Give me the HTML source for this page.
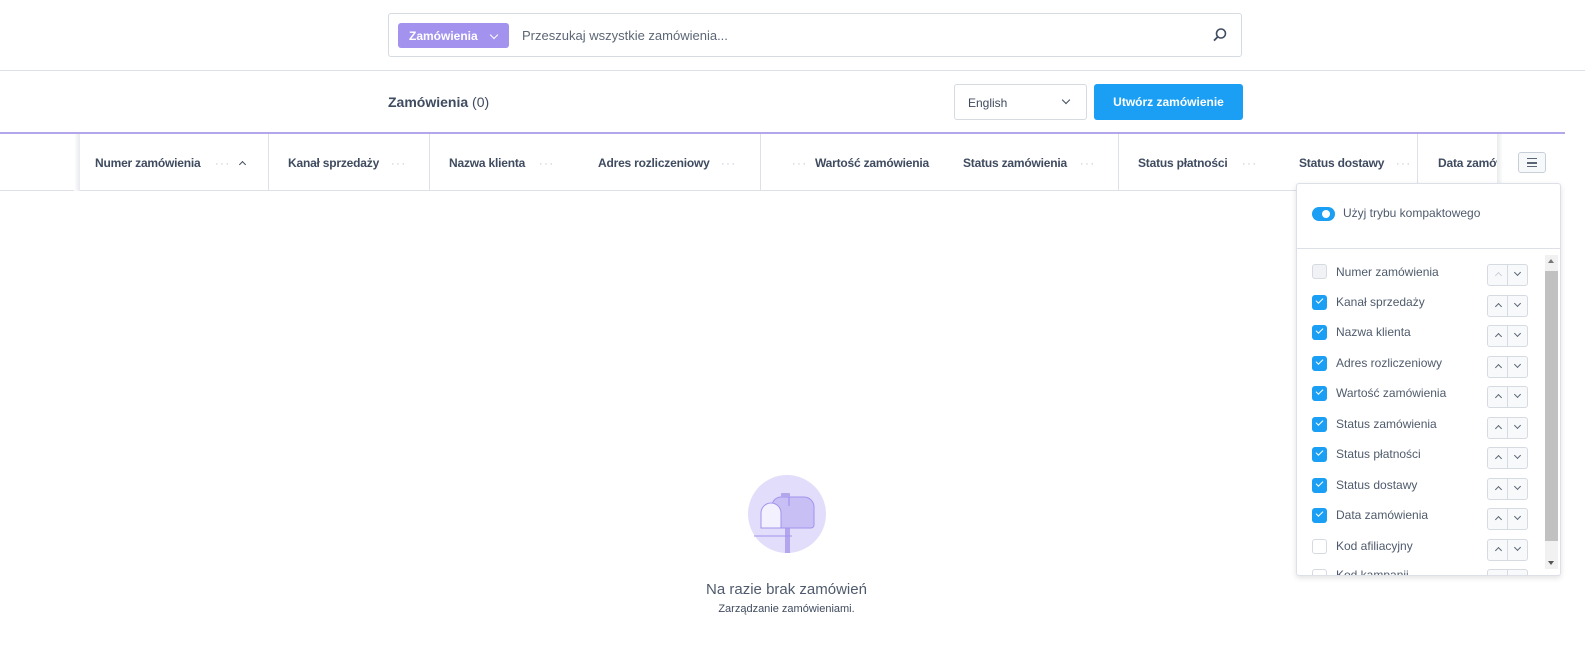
<!DOCTYPE html>
<html><head><meta charset="utf-8"><style>
*{box-sizing:border-box;margin:0;padding:0}
body{width:1585px;height:651px;overflow:hidden;background:#fff;font-family:"Liberation Sans",sans-serif;color:#3f4b5f;position:relative}
.abs{position:absolute}
.search{left:388px;top:13px;width:854px;height:44px;border:1px solid #d6dbe1;border-radius:3px}
.pill{left:9px;top:9px;width:111px;height:25px;background:#a393ee;border-radius:3px;color:#fff;font-size:12px;font-weight:bold;padding:6px 0 0 11px}
.hdr{font-size:12px;font-weight:bold;color:#3f4b5f;top:156px;letter-spacing:-0.2px}
.dots{color:#bcc3cc;font-size:11px;top:158px;letter-spacing:1.5px}
.vl{width:1px;background:#dde1e7;top:134px;height:57px}
.row{left:1312px;font-size:12px;color:#4f5b6c}
.cb{width:15px;height:15px;border-radius:3px;background:#1a9ff5;left:1312px}
.cb::after{content:"";position:absolute;left:4px;top:3px;width:6px;height:3px;border-left:1.5px solid #fff;border-bottom:1.5px solid #fff;transform:rotate(-45deg)}
.cbe{width:15px;height:15px;border-radius:3px;border:1px solid #d6dbe1;left:1312px}
.btns{left:1487px;width:41px;height:22px;border:1px solid #d6dbe1;border-radius:3px;background:#f8f9fb}
.btns::before{content:"";position:absolute;left:19px;top:0;width:1px;height:20px;background:#d6dbe1}
.btns i{position:absolute;top:6px;width:5px;height:5px;border-left:1.5px solid #5b6574;border-top:1.5px solid #5b6574}
.btns i.u{left:8px;top:8px;transform:rotate(45deg)}
.btns i.d{left:27px;top:5px;transform:rotate(225deg)}
</style></head><body>
<div class="abs search">
 <div class="abs pill">Zamówienia <span style="display:inline-block;width:6px;height:6px;border-right:1.5px solid #fff;border-bottom:1.5px solid #fff;transform:rotate(45deg);margin:0 0 2px 10px"></span></div>
 <div class="abs" style="left:133px;top:14px;font-size:13px;color:#5d6775">Przeszukaj wszystkie zamówienia...</div>
 <svg class="abs" style="left:823px;top:13px" width="16" height="16" viewBox="0 0 16 16"><circle cx="9" cy="6.5" r="4.5" fill="none" stroke="#3f4b5f" stroke-width="1.6"/><path d="M5.8 9.8L2 13.6" stroke="#3f4b5f" stroke-width="1.8"/></svg>
</div>
<div class="abs" style="left:0;top:70px;width:1585px;height:1px;background:#dde1e7"></div>
<div class="abs" style="left:388px;top:94px;font-size:14px;font-weight:bold;color:#3f4b5f">Zamówienia <span style="font-weight:normal">(0)</span></div>
<div class="abs" style="left:954px;top:84px;width:133px;height:36px;border:1px solid #d6dbe1;border-radius:3px;font-size:12px;padding:11px 0 0 13px">English<span class="abs" style="right:17px;top:12px;width:6px;height:6px;border-right:1.5px solid #3f4b5f;border-bottom:1.5px solid #3f4b5f;transform:rotate(45deg)"></span></div>
<div class="abs" style="left:1094px;top:84px;width:149px;height:36px;background:#1a9ff5;border-radius:3px;color:#fff;font-size:12px;font-weight:bold;text-align:center;padding-top:11px">Utwórz zamówienie</div>
<div class="abs" style="left:0;top:132px;width:1565px;height:2px;background:#b3a6ec"></div>
<div class="abs" style="left:0;top:190px;width:1497px;height:1px;background:#dde1e7"></div>
<div class="abs" style="left:74px;top:134px;width:6px;height:57px;background:linear-gradient(to right,#fff,#e8eaed)"></div>
<div class="abs vl" style="left:268px"></div><div class="abs vl" style="left:429px"></div><div class="abs vl" style="left:760px"></div><div class="abs vl" style="left:1118px"></div><div class="abs vl" style="left:1417px"></div>
<div class="abs" style="left:1497px;top:134px;width:6px;height:57px;background:linear-gradient(to left,#fff,#e8eaed)"></div>
<div class="abs hdr" style="left:95px">Numer zamówienia</div><div class="abs dots" style="left:215px">···</div><div class="abs" style="left:240px;top:162px;width:5px;height:5px;border-left:1.5px solid #3f4b5f;border-top:1.5px solid #3f4b5f;transform:rotate(45deg)"></div>
<div class="abs hdr" style="left:288px">Kanał sprzedaży</div><div class="abs dots" style="left:391px">···</div>
<div class="abs hdr" style="left:449px">Nazwa klienta</div><div class="abs dots" style="left:539px">···</div>
<div class="abs hdr" style="left:598px">Adres rozliczeniowy</div><div class="abs dots" style="left:721px">···</div>
<div class="abs dots" style="left:792px">···</div><div class="abs hdr" style="left:815px">Wartość zamówienia</div>
<div class="abs hdr" style="left:963px">Status zamówienia</div><div class="abs dots" style="left:1080px">···</div>
<div class="abs hdr" style="left:1138px">Status płatności</div><div class="abs dots" style="left:1242px">···</div>
<div class="abs hdr" style="left:1299px">Status dostawy</div><div class="abs dots" style="left:1396px">···</div>
<div class="abs hdr" style="left:1438px;width:59px;overflow:hidden;white-space:nowrap">Data zamówienia</div>
<div class="abs" style="left:1518px;top:152px;width:28px;height:21px;border:1px solid #c9cfd7;border-radius:3px;background:#f7f8fa"><div class="abs" style="left:8px;top:5px;width:10px;height:9px;border-top:1.5px solid #5b6574;border-bottom:1.5px solid #5b6574"></div><div class="abs" style="left:8px;top:9px;width:10px;height:1.5px;background:#5b6574"></div></div>
<div class="abs" style="left:1296px;top:183px;width:265px;height:393px;border:1px solid #dde1e7;border-radius:3px;background:#fff;box-shadow:0 2px 6px rgba(0,0,0,.12);overflow:hidden">
 <div class="abs" style="left:15px;top:23px;width:23px;height:14px;border-radius:7px;background:#1a9ff5"><div class="abs" style="left:10px;top:3px;width:8px;height:8px;border-radius:4px;background:#fff"></div></div>
 <div class="abs" style="left:46px;top:22px;font-size:12px;color:#4f5b6c">Użyj trybu kompaktowego</div>
 <div class="abs" style="left:0;top:64px;width:265px;height:1px;background:#dde1e7"></div>
 <div class="abs" style="left:248px;top:71px;width:13px;height:314px;background:#f1f1f1"><div class="abs" style="left:0;top:16px;width:13px;height:270px;background:#c1c1c1"></div><div class="abs" style="left:3px;top:4px;border:3.5px solid transparent;border-bottom:4px solid #777;border-top:0"></div><div class="abs" style="left:3px;top:306px;border:3.5px solid transparent;border-top:4px solid #555;border-bottom:0"></div></div>
</div>
<div class="abs cbe" style="top:264px;background:#f0f2f5"></div>
<div class="abs" style="left:1336px;top:265px;font-size:12px;color:#4f5b6c">Numer zamówienia</div>
<div class="abs btns" style="top:264px"><i class="u" style="border-color:#c9cfd7"></i><i class="d"></i></div>
<div class="abs cb" style="top:295px"></div><div class="abs row" style="left:1336px;top:295px">Kanał sprzedaży</div><div class="abs btns" style="top:295px"><i class="u"></i><i class="d"></i></div>
<div class="abs cb" style="top:325px"></div><div class="abs row" style="left:1336px;top:325px">Nazwa klienta</div><div class="abs btns" style="top:325px"><i class="u"></i><i class="d"></i></div>
<div class="abs cb" style="top:356px"></div><div class="abs row" style="left:1336px;top:356px">Adres rozliczeniowy</div><div class="abs btns" style="top:356px"><i class="u"></i><i class="d"></i></div>
<div class="abs cb" style="top:386px"></div><div class="abs row" style="left:1336px;top:386px">Wartość zamówienia</div><div class="abs btns" style="top:386px"><i class="u"></i><i class="d"></i></div>
<div class="abs cb" style="top:417px"></div><div class="abs row" style="left:1336px;top:417px">Status zamówienia</div><div class="abs btns" style="top:417px"><i class="u"></i><i class="d"></i></div>
<div class="abs cb" style="top:447px"></div><div class="abs row" style="left:1336px;top:447px">Status płatności</div><div class="abs btns" style="top:447px"><i class="u"></i><i class="d"></i></div>
<div class="abs cb" style="top:478px"></div><div class="abs row" style="left:1336px;top:478px">Status dostawy</div><div class="abs btns" style="top:478px"><i class="u"></i><i class="d"></i></div>
<div class="abs cb" style="top:508px"></div><div class="abs row" style="left:1336px;top:508px">Data zamówienia</div><div class="abs btns" style="top:508px"><i class="u"></i><i class="d"></i></div>
<div class="abs cbe" style="top:539px"></div><div class="abs row" style="left:1336px;top:539px">Kod afiliacyjny</div><div class="abs btns" style="top:539px"><i class="u"></i><i class="d"></i></div>
<div class="abs" style="left:1297px;top:566px;width:250px;height:9px;overflow:hidden"><div class="abs cbe" style="left:15px;top:3px"></div><div class="abs row" style="left:39px;top:2px">Kod kampanii</div><div class="abs btns" style="left:190px;top:3px"></div></div>
<svg class="abs" style="left:748px;top:475px" width="78" height="78" viewBox="0 0 78 78">
<circle cx="39" cy="39" r="39" fill="#e2ddfb"/>
<rect x="37" y="50" width="5" height="28" fill="#b3a6ec"/>
<path d="M24 31a9 9 0 0 1 9-9h23a10 10 0 0 1 10 10v18a3 3 0 0 1-3 3H24z" fill="#c8bff4" stroke="#a393ee" stroke-width="1"/>
<path d="M13 53V38a10 10 0 0 1 20 0v15z" fill="#f3f1fe" stroke="#a393ee" stroke-width="1"/>
<line x1="6" y1="61" x2="44" y2="61" stroke="#a393ee" stroke-width="1"/>
<path d="M41 31V20" stroke="#a393ee" stroke-width="1.2"/><rect x="33" y="18" width="9" height="4" rx="1" fill="#b3a6ec"/>
</svg>
<div class="abs" style="left:0;width:1573px;text-align:center;top:581px;font-size:15px;color:#4f5b6c">Na razie brak zamówień</div>
<div class="abs" style="left:0;width:1573px;text-align:center;top:603px;font-size:11px;color:#3f4b5f">Zarządzanie zamówieniami.</div>
</body></html>
